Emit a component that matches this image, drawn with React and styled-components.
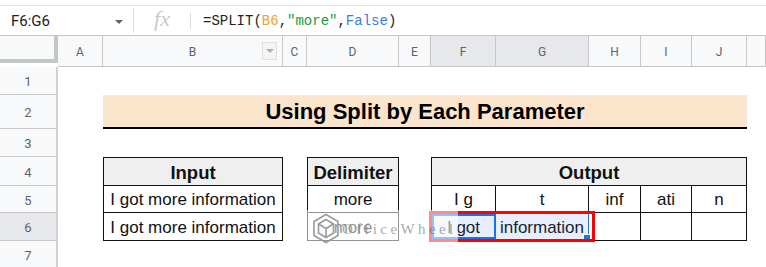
import React from 'react';
import styled, { createGlobalStyle } from 'styled-components';

const GlobalStyle = createGlobalStyle`
    body {
        margin: 0;
        background: #fff;
        font-family: Roboto, "Liberation Sans", sans-serif;
        overflow: hidden;
    }
`;

// Sheet geometry
const COLUMNS = ['A', 'B', 'C', 'D', 'E', 'F', 'G', 'H', 'I', 'J', ''];
const COL_WIDTHS = '58px 45px 180px 24px 92px 32px 65px 93px 52px 51px 55px 1fr';
const ROW_HEIGHTS = [28, 34, 28, 29, 27, 28, 28];
const SELECTED_COLS = ['F', 'G'];
const SELECTED_ROW = 6;

const outputParts = ['I g', 't', 'inf', 'ati', 'n'];

const WheelLogo = () => (
    <svg width="28" height="31" viewBox="0 0 28 31" fill="none" stroke="#9a9a9a" strokeWidth="1.6">
        <path d="M14 1.5 L26 8.5 L26 22.5 L14 29.5 L2 22.5 L2 8.5 Z" />
        <path d="M14 6.5 L21.5 11 L21.5 20 L14 24.5 L6.5 20 L6.5 11 Z" />
        <path d="M6.5 11 L14 15.5 L21.5 11 M14 15.5 L14 24.5" />
    </svg>
);

const App = () => {
    return (
        <Page>
            <GlobalStyle />
            <TopStrip />
            <FormulaBar>
                <NameBox>
                    <span>F6:G6</span>
                    <Caret />
                </NameBox>
                <Divider />
                <FxBox>fx</FxBox>
                <Divider $short />
                <Formula>
                    =SPLIT(<Ref>B6</Ref>,<Str>"more"</Str>,<Bool>False</Bool>)
                </Formula>
            </FormulaBar>

            <Sheet>
                <Corner />
                {COLUMNS.map((c, i) => (
                    <ColHead key={'c' + i} $col={i + 2} $active={SELECTED_COLS.includes(c)}>
                        {c}
                        {c === 'B' && <FilterBtn />}
                    </ColHead>
                ))}
                {ROW_HEIGHTS.map((h, i) => (
                    <RowHead key={'r' + i} $row={i + 2} $active={i + 1 === SELECTED_ROW}>
                        {i + 1}
                    </RowHead>
                ))}

                <Title $col={3} $span={9} $row={3}>Using Split by Each Parameter</Title>

                {/* Input */}
                <Cell $col={3} $row={5} $top $left $head>Input</Cell>
                <Cell $col={3} $row={6} $left>I got more information</Cell>
                <Cell $col={3} $row={7} $left>I got more information</Cell>

                {/* Delimiter */}
                <Cell $col={5} $row={5} $top $left $head>Delimiter</Cell>
                <Cell $col={5} $row={6} $left>more</Cell>
                <Cell $col={5} $row={7} $left>more</Cell>

                {/* Output */}
                <Cell $col={7} $span={5} $row={5} $top $left $head>Output</Cell>
                {outputParts.map((p, i) => (
                    <Cell key={'o' + i} $col={7 + i} $row={6} $left={i === 0}>{p}</Cell>
                ))}
                <Cell $col={7} $row={7} $left>I got</Cell>
                <Cell $col={8} $row={7}>information</Cell>
                <Cell $col={9} $row={7} />
                <Cell $col={10} $row={7} />
                <Cell $col={11} $row={7} />

                <Selection $col={7} $span={2} $row={7}>
                    <ActiveCell />
                    <FillHandle />
                    <RedFrame />
                </Selection>

                <Watermark>
                    <WheelLogo />
                    <WatermarkText>OfficeWheel</WatermarkText>
                </Watermark>
            </Sheet>
        </Page>
    );
};

const Page = styled.div`
    width: 766px;
    height: 267px;
    overflow: hidden;
`;

const TopStrip = styled.div`
    height: 5px;
    border-bottom: 1px solid #e3e3e3;
`;

const FormulaBar = styled.div`
    display: flex;
    align-items: center;
    height: 29px;
    border-bottom: 1px solid #c7c7c7;
`;

const NameBox = styled.div`
    width: 133px;
    box-sizing: border-box;
    display: flex;
    align-items: center;
    justify-content: space-between;
    padding: 0 10px 0 11px;
    font-size: 15px;
    color: #202124;
`;

const Caret = styled.span`
    width: 0;
    height: 0;
    border-left: 4px solid transparent;
    border-right: 4px solid transparent;
    border-top: 4px solid #5f6368;
    margin-top: 2px;
`;

const Divider = styled.div`
    width: 1px;
    align-self: center;
    height: ${p => (p.$short ? '16px' : '25px')};
    background: #dadce0;
`;

const FxBox = styled.div`
    width: 56px;
    text-align: center;
    font-family: "Liberation Serif", serif;
    font-style: italic;
    font-size: 22px;
    color: #c8c8c8;
    line-height: 1;
    margin-top: -3px;
`;

const Formula = styled.div`
    padding-left: 12px;
    font-family: "Liberation Mono", monospace;
    font-size: 14px;
    color: #222;
    white-space: pre;
`;

const Ref = styled.span`
    color: #f0a035;
`;

const Str = styled.span`
    color: #1e9a3e;
`;

const Bool = styled.span`
    color: #3b7de0;
`;

const Sheet = styled.div`
    position: relative;
    display: grid;
    grid-template-columns: ${COL_WIDTHS};
    grid-template-rows: 31px ${ROW_HEIGHTS.map(h => h + 'px').join(' ')};
`;

const Corner = styled.div`
    grid-column: 1;
    grid-row: 1;
    background: #f8f9fa;
    border-right: 4px solid #c4c7c5;
    border-bottom: 4px solid #c4c7c5;
    margin-bottom: 4px;
`;

const ColHead = styled.div`
    position: relative;
    grid-column: ${p => p.$col};
    grid-row: 1;
    display: flex;
    align-items: center;
    justify-content: center;
    padding-top: 1px;
    background: ${p => (p.$active ? '#e6e8eb' : '#f8f9fa')};
    border-right: 1px solid #c7c7c7;
    border-bottom: 1px solid #c7c7c7;
    font-size: 12px;
    color: #606368;
`;

const FilterBtn = styled.span`
    position: absolute;
    right: 5px;
    top: 6px;
    width: 15px;
    height: 18px;
    box-sizing: border-box;
    border: 1px solid #e0e0e0;
    background: #f4f4f4;
    &::after {
        content: '';
        position: absolute;
        left: 3px;
        top: 6px;
        border-left: 4px solid transparent;
        border-right: 4px solid transparent;
        border-top: 4px solid #b0b0b0;
    }
`;

const RowHead = styled.div`
    grid-column: 1;
    grid-row: ${p => p.$row};
    display: flex;
    align-items: center;
    justify-content: center;
    padding-top: 2px;
    background: ${p => (p.$active ? '#e6e8eb' : '#f8f9fa')};
    border-right: 2px solid #cfd1d2;
    border-bottom: 1px solid #c7c7c7;
    font-size: 13px;
    color: #606368;
`;

const Title = styled.div`
    grid-column: ${p => p.$col} / span ${p => p.$span};
    grid-row: ${p => p.$row};
    display: flex;
    align-items: center;
    justify-content: center;
    padding-top: 1px;
    background: #fce5cd;
    border-bottom: 2px solid #000;
    font-family: "Liberation Sans", Arial, sans-serif;
    font-weight: bold;
    font-size: 22px;
    color: #000;
`;

const Cell = styled.div`
    grid-column: ${p => p.$col} / span ${p => p.$span || 1};
    grid-row: ${p => p.$row};
    display: flex;
    align-items: center;
    justify-content: center;
    padding-top: 2px;
    background: ${p => (p.$head ? '#efefef' : '#fff')};
    border-right: 1px solid #111;
    border-bottom: 1px solid #111;
    border-top: ${p => (p.$top ? '1px solid #111' : 'none')};
    border-left: ${p => (p.$left ? '1px solid #111' : 'none')};
    font-family: "Liberation Sans", Arial, sans-serif;
    font-weight: ${p => (p.$head ? 'bold' : 'normal')};
    font-size: ${p => (p.$head ? '18.5px' : '17px')};
    color: #111;
    white-space: nowrap;
    overflow: hidden;
`;

const Selection = styled.div`
    position: relative;
    grid-column: ${p => p.$col} / span ${p => p.$span};
    grid-row: ${p => p.$row};
    background: rgba(66, 133, 244, 0.13);
    border: 1px solid #1a73e8;
    margin: 0 0 1px;
    z-index: 2;
`;

const ActiveCell = styled.div`
    position: absolute;
    left: 0;
    top: 0;
    bottom: 0;
    width: 64px;
    box-sizing: border-box;
    border: 2px solid #1a73e8;
`;

const FillHandle = styled.div`
    position: absolute;
    right: -3px;
    bottom: -3px;
    width: 6px;
    height: 6px;
    background: #1a73e8;
    border: 1px solid #fff;
`;

const RedFrame = styled.div`
    position: absolute;
    left: -3px;
    right: -7px;
    top: -3px;
    bottom: -3px;
    border: 3px solid #ff0000;
`;

const Watermark = styled.div`
    position: absolute;
    left: 306px;
    top: 174px;
    width: 152px;
    height: 36px;
    display: flex;
    align-items: center;
    gap: 2px;
    padding-left: 6px;
    box-sizing: border-box;
    background: rgba(255, 255, 255, 0.55);
    z-index: 3;
`;

const WatermarkText = styled.span`
    font-family: "Liberation Serif", serif;
    font-size: 15px;
    letter-spacing: 3.4px;
    color: rgba(110, 110, 110, 0.6);
    margin-top: 2px;
`;

export default App;
